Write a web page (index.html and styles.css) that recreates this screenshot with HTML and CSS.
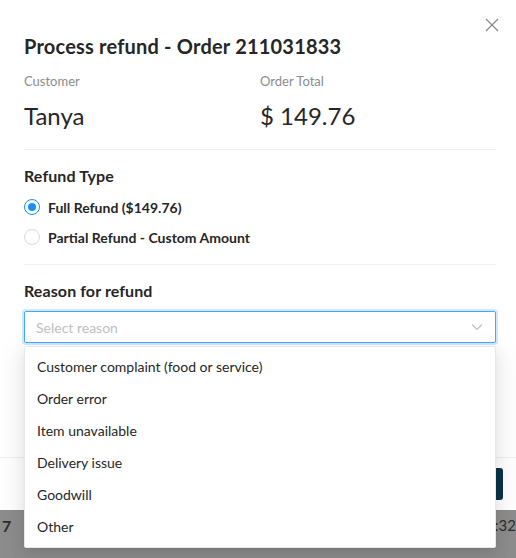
FILE: index.html
```html
<!DOCTYPE html>
<html lang="en">
<head>
<meta charset="utf-8">
<title>Process refund</title>
<link rel="stylesheet" href="styles.css">
</head>
<body>
<div class="modal">
  <button class="close" aria-label="Close">
    <svg width="14" height="14" viewBox="0 0 14 14"><path d="M1 1L13 13M13 1L1 13" stroke="#8c8c8c" stroke-width="1.3" fill="none"/></svg>
  </button>
  <div class="modal-body">
    <h2 class="title">Process refund - Order 211031833</h2>
    <div class="summary">
      <div class="summary-col customer">
        <div class="label">Customer</div>
        <div class="value">Tanya</div>
      </div>
      <div class="summary-col">
        <div class="label">Order Total</div>
        <div class="value">$ 149.76</div>
      </div>
    </div>
    <div class="divider"></div>
    <h3 class="section-title">Refund Type</h3>
    <div class="radio-group">
      <label class="radio checked"><span class="radio-dot"></span><span>Full Refund ($149.76)</span></label>
      <label class="radio"><span class="radio-dot"></span><span>Partial Refund - Custom Amount</span></label>
    </div>
    <div class="divider"></div>
    <h3 class="section-title">Reason for refund</h3>
    <div class="select-wrap">
      <div class="select">
        <span class="placeholder">Select reason</span>
        <svg class="chevron" width="12" height="8" viewBox="0 0 12 8"><path d="M1 1.5L6 6.5L11 1.5" stroke="#bfbfbf" stroke-width="1.2" fill="none"/></svg>
      </div>
      <ul class="dropdown">
        <li>Customer complaint (food or service)</li>
        <li>Order error</li>
        <li>Item unavailable</li>
        <li>Delivery issue</li>
        <li>Goodwill</li>
        <li>Other</li>
      </ul>
    </div>
  </div>
  <div class="modal-footer">
    <button class="btn-primary">Process refund</button>
  </div>
</div>
<div class="backdrop-row">
  <span class="bg-num">7</span>
  <span class="bg-time">0:32</span>
</div>
</body>
</html>
```
FILE: styles.css
```css
* { box-sizing: border-box; }
html, body {
  margin: 0;
  padding: 0;
}
body {
  width: 516px;
  height: 558px;
  overflow: hidden;
  background: #8d8d8d;
  font-family: "Lato", "Liberation Sans", sans-serif;
  color: #262626;
}
.modal {
  position: relative;
  width: 516px;
  height: 510px;
  background: #ffffff;
  display: flex;
  flex-direction: column;
}
.close {
  position: absolute;
  top: 18px;
  right: 17px;
  width: 14px;
  height: 14px;
  padding: 0;
  border: 0;
  background: none;
  display: flex;
}
.modal-body {
  padding: 34px 20px 0 24px;
}
.title {
  margin: 0;
  font-size: 20px;
  line-height: 24px;
  font-weight: 700;
  letter-spacing: 0.2px;
  color: #262626;
}
.summary {
  display: flex;
  margin-top: 14px;
}
.summary-col.customer {
  width: 236px;
}
.label {
  font-size: 13px;
  line-height: 18px;
  color: #8c8c8c;
}
.value {
  margin-top: 11px;
  font-size: 24px;
  line-height: 30px;
  color: #262626;
}
.divider {
  height: 1px;
  background: #f0f0f0;
  margin: 18px 0 0;
}
.divider + .section-title { margin-top: 16px; }
.section-title {
  margin: 0;
  font-size: 16px;
  line-height: 20px;
  font-weight: 700;
  letter-spacing: 0.1px;
  color: #262626;
}
.radio-group {
  display: flex;
  flex-direction: column;
  gap: 10px;
  margin-top: 11px;
}
.radio-group + .divider { margin-top: 17px; }
.radio {
  display: flex;
  align-items: center;
  gap: 8px;
  height: 20px;
  font-size: 14px;
  font-weight: 700;
  color: #262626;
}
.radio-dot {
  width: 16px;
  height: 16px;
  border-radius: 50%;
  border: 1px solid #d9d9d9;
  background: #fff;
  display: flex;
  align-items: center;
  justify-content: center;
}
.radio.checked .radio-dot {
  border-color: #1890ff;
}
.radio.checked .radio-dot::after {
  content: "";
  width: 8px;
  height: 8px;
  border-radius: 50%;
  background: #1890ff;
}
.select-wrap {
  position: relative;
  margin-top: 10px;
}
.select {
  height: 32px;
  border: 1px solid #40a9ff;
  border-radius: 2px;
  box-shadow: 0 0 0 2px rgba(24, 144, 255, 0.2);
  display: flex;
  align-items: center;
  justify-content: space-between;
  padding: 0 12px 0 11px;
}
.placeholder {
  font-size: 14px;
  color: #bfbfbf;
}
.chevron { display: block; }
.dropdown {
  position: absolute;
  left: 0;
  right: 0;
  top: 35px;
  margin: 0;
  padding: 4px 0;
  list-style: none;
  background: #fff;
  border-radius: 2px;
  border: 1px solid #e8e8e8;
  box-shadow: 0 3px 6px -4px rgba(0,0,0,.12), 0 6px 16px 0 rgba(0,0,0,.08), 0 9px 28px 8px rgba(0,0,0,.05);
  z-index: 10;
}
.dropdown li {
  height: 32px;
  line-height: 32px;
  padding: 0 12px;
  font-size: 14px;
  color: #262626;
}
.modal-footer {
  margin-top: auto;
  height: 53px;
  border-top: 1px solid #f0f0f0;
  display: flex;
  justify-content: flex-end;
  align-items: flex-start;
  padding: 10px 13px 0 0;
}
.btn-primary {
  height: 32px;
  width: 120px;
  border: 0;
  border-radius: 3px;
  background: #0b3349;
  color: #fff;
  font-family: inherit;
  font-size: 14px;
}
.backdrop-row {
  height: 48px;
  display: flex;
  justify-content: space-between;
  align-items: flex-start;
  padding-top: 6px;
  margin-left: 2px;
  margin-right: 0;
  font-size: 16px;
  font-weight: 700;
  color: #2e2e2e;
}
.bg-time { font-weight: 400; font-size: 15px; }
```
